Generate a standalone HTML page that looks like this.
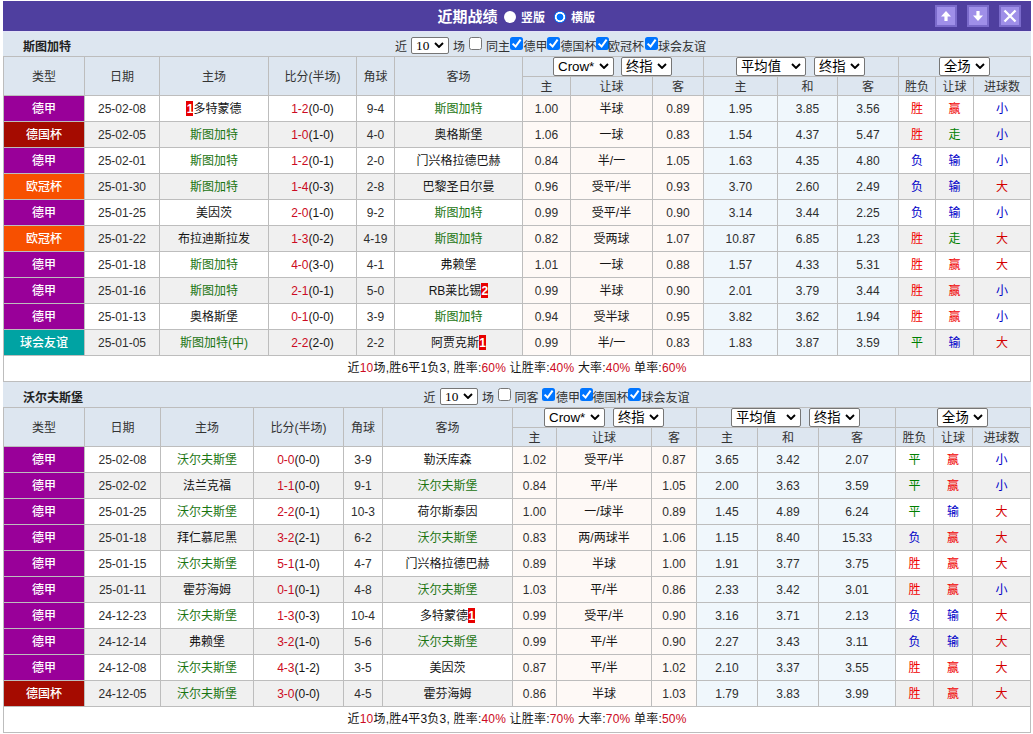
<!DOCTYPE html>
<html lang="zh-CN"><head><meta charset="utf-8"><title>近期战绩</title>
<style>
html,body{margin:0;padding:0;background:#fff;}
body{width:1033px;height:734px;overflow:hidden;position:relative;font-family:"Liberation Sans","Noto Sans CJK SC",sans-serif;font-size:12px;color:#333;}
.wrap{position:absolute;left:3px;top:1px;width:1028px;}
.hdr{position:relative;height:30px;background:#4f3f9f;color:#fff;font-weight:bold;}
.ttl{position:absolute;left:434.5px;top:6px;font-size:15px;line-height:20px;}
.rd{position:absolute;top:10.4px;margin-left:.3px;width:12px;height:12px;border-radius:50%;background:#fff;box-sizing:border-box;}
.rd.on{background:radial-gradient(circle at 50% 50%,#0075ff 0,#0075ff 3.1px,#fff 3.7px,#fff 4.9px,#0075ff 5.3px,#0075ff 6px);}
.rl{position:absolute;top:8px;line-height:18px;font-size:12px;}
.btn{position:absolute;top:4px;width:18px;height:18px;border:2px solid #7b6bcb;background:#9f8fe8;}
.btn svg{display:block;}
.tm{position:relative;height:25px;background:#dde6f0;}
.tn{position:absolute;left:20px;top:7px;line-height:18px;font-weight:bold;color:#222;}
.ft{position:absolute;top:6.5px;line-height:18px;color:#333;white-space:nowrap;}
.cb{position:absolute;top:6px;width:13px;height:13px;box-sizing:border-box;border:1px solid #767676;border-radius:2.5px;background:#fff;}
.cb.on{border:none;background:#0075ff;}
.cb svg{display:block;}
.fsel{position:absolute;top:6px;}
.sel{display:inline-block;position:relative;box-sizing:border-box;height:19px;border:1px solid #767676;border-radius:2px;background:#fff;color:#000;font-size:13.33px;line-height:18px;text-align:left;vertical-align:top;font-weight:normal;}
.sel span{position:absolute;left:4px;top:0;}
.sel svg{position:absolute;right:4px;top:5px;}
.sel.m7{margin-left:7px;}
.sel.m8{margin-left:8px;}
.sel.s10{height:17px;line-height:15px;font-family:"Liberation Serif",serif;}
.sel.s10 span{left:4px;}
.sel.s10 svg{top:4px;}
table{border-collapse:separate;border-spacing:0;table-layout:fixed;width:1028px;border-left:1px solid #bdbdbd;border-top:1px solid #bdbdbd;}
td{color:#151515;}
td,th{border-right:1px solid #bdbdbd;border-bottom:1px solid #bdbdbd;padding:0;text-align:center;font-weight:normal;white-space:nowrap;overflow:hidden;box-sizing:border-box;}
th{background:#dde6f0;color:#333;}
tr.h1{height:20px;}
tr.h2{height:19px;}
tr.h1 th{height:20px;}
tr.h2 th{height:19px;line-height:16px;padding-top:2px;}
tr.h1 th[rowspan]{padding-bottom:2px;}
tr.o td,tr.e td{height:26px;line-height:23px;padding-top:2px;}
tr.o td{background:#fff;}
tr.e td{background:#f0f0f0;}
td.n{color:#2e2e2e;}
.tm.first{box-shadow:inset 0 1px 0 #e4e2f8;}
td.ah{background:#fef9f6 !important;}
td.eu{background:#f0f7fc !important;}
.r{color:#cc0a22;font-weight:normal;}
td.r{color:#f00000;}
td.b{color:#0000c8;}
td.g{color:#1a7410;}
td.gg{color:#008000;}
td.rr{color:#d40000;}
td.lg{color:#fff;font-weight:500;}
td.l1{background:#990099 !important;}
td.l2{background:#a50b00 !important;}
td.l3{background:#f75000 !important;}
td.l4{background:#00a3a3 !important;}
i.rc{display:inline-block;font-style:normal;font-weight:bold;background:#e80000;color:#fff;width:7px;height:15px;line-height:17px;overflow:hidden;text-align:center;vertical-align:top;margin-top:3px;font-size:12px;}
tr.sum td{height:26px;line-height:25px;background:#fff;letter-spacing:.2px;}
em{font-style:normal;color:#cc0a22;}
th.sc{vertical-align:top;text-align:left;}
</style></head>
<body>
<div class="wrap">
<div class="hdr"><span class="ttl">近期战绩</span><i class="rd" style="left:501px"></i><span class="rl" style="left:518px">竖版</span><i class="rd on" style="left:551px"></i><span class="rl" style="left:568px">横版</span>
<span class="btn" style="left:932px"><svg viewBox="0 0 18 18" width="18" height="18"><path d="M9 4 L14 9.4 L10.6 9.4 L10.6 14 L7.4 14 L7.4 9.4 L4 9.4 Z" fill="#fff"/></svg></span>
<span class="btn" style="left:964px"><svg viewBox="0 0 18 18" width="18" height="18"><path d="M9 14 L14 8.6 L10.6 8.6 L10.6 4 L7.4 4 L7.4 8.6 L4 8.6 Z" fill="#fff"/></svg></span>
<span class="btn" style="left:996px"><svg viewBox="0 0 18 18" width="18" height="18"><path d="M3.5 3.5 L14.5 14.5 M14.5 3.5 L3.5 14.5" stroke="#fff" stroke-width="2.3" fill="none"/></svg></span>
</div>
<div class="tm first"><span class="tn">斯图加特</span><span class="ft" style="left:392.0px">近</span><span class="fsel" style="left:408px"><span class="sel s10" style="width:38px"><span>10</span><svg viewBox="0 0 10 6" width="10" height="6"><path d="M1 1 L5 5 L9 1" fill="none" stroke="#000" stroke-width="1.9"/></svg></span></span><span class="ft" style="left:450.0px">场</span><i class="cb" style="left:465.5px"></i><span class="ft" style="left:483.0px">同主</span><i class="cb on" style="left:507.0px"><svg viewBox="0 0 13 13" width="13" height="13"><path d="M2.6 6.6 L5.6 9.5 L10.6 2.6" fill="none" stroke="#fff" stroke-width="2"/></svg></i><span class="ft" style="left:520.5px">德甲</span><i class="cb on" style="left:544.0px"><svg viewBox="0 0 13 13" width="13" height="13"><path d="M2.6 6.6 L5.6 9.5 L10.6 2.6" fill="none" stroke="#fff" stroke-width="2"/></svg></i><span class="ft" style="left:557.5px">德国杯</span><i class="cb on" style="left:592.5px"><svg viewBox="0 0 13 13" width="13" height="13"><path d="M2.6 6.6 L5.6 9.5 L10.6 2.6" fill="none" stroke="#fff" stroke-width="2"/></svg></i><span class="ft" style="left:605.0px">欧冠杯</span><i class="cb on" style="left:641.5px"><svg viewBox="0 0 13 13" width="13" height="13"><path d="M2.6 6.6 L5.6 9.5 L10.6 2.6" fill="none" stroke="#fff" stroke-width="2"/></svg></i><span class="ft" style="left:655.0px">球会友谊</span></div>
<table><colgroup><col style="width:81px"><col style="width:75px"><col style="width:109px"><col style="width:88px"><col style="width:38px"><col style="width:128px"><col style="width:48px"><col style="width:82px"><col style="width:51px"><col style="width:74px"><col style="width:60px"><col style="width:61px"><col style="width:37px"><col style="width:38px"><col style="width:57px"></colgroup>
<tr class="h1"><th rowspan="2">类型</th><th rowspan="2">日期</th><th rowspan="2">主场</th><th rowspan="2">比分(半场)</th><th rowspan="2">角球</th><th rowspan="2">客场</th><th colspan="3" class="sc" style="padding-left:30px"><span class="sel " style="width:61px"><span>Crow*</span><svg viewBox="0 0 10 6" width="10" height="6"><path d="M1 1 L5 5 L9 1" fill="none" stroke="#000" stroke-width="1.9"/></svg></span><span class="sel m7" style="width:51px"><span>终指</span><svg viewBox="0 0 10 6" width="10" height="6"><path d="M1 1 L5 5 L9 1" fill="none" stroke="#000" stroke-width="1.9"/></svg></span></th><th colspan="3" class="sc" style="padding-left:32px"><span class="sel " style="width:70px"><span>平均值</span><svg viewBox="0 0 10 6" width="10" height="6"><path d="M1 1 L5 5 L9 1" fill="none" stroke="#000" stroke-width="1.9"/></svg></span><span class="sel m8" style="width:51px"><span>终指</span><svg viewBox="0 0 10 6" width="10" height="6"><path d="M1 1 L5 5 L9 1" fill="none" stroke="#000" stroke-width="1.9"/></svg></span></th><th colspan="3" class="sc" style="padding-left:40px"><span class="sel " style="width:51px"><span>全场</span><svg viewBox="0 0 10 6" width="10" height="6"><path d="M1 1 L5 5 L9 1" fill="none" stroke="#000" stroke-width="1.9"/></svg></span></th></tr>
<tr class="h2"><th>主</th><th>让球</th><th>客</th><th>主</th><th>和</th><th>客</th><th>胜负</th><th>让球</th><th>进球数</th></tr>
<tr class="o"><td class="lg l1">德甲</td><td class="n">25-02-08</td><td><i class="rc">1</i>多特蒙德</td><td><b class="r">1-2</b>(0-0)</td><td class="n">9-4</td><td class="g">斯图加特</td><td class="ah n">1.00</td><td class="ah">半球</td><td class="ah n">0.89</td><td class="eu n">1.95</td><td class="eu n">3.85</td><td class="eu n">3.56</td><td class="r">胜</td><td class="r">赢</td><td class="b">小</td></tr>
<tr class="e"><td class="lg l2">德国杯</td><td class="n">25-02-05</td><td class="g">斯图加特</td><td><b class="r">1-0</b>(1-0)</td><td class="n">4-0</td><td>奥格斯堡</td><td class="ah n">1.06</td><td class="ah">一球</td><td class="ah n">0.83</td><td class="eu n">1.54</td><td class="eu n">4.37</td><td class="eu n">5.47</td><td class="r">胜</td><td class="gg">走</td><td class="b">小</td></tr>
<tr class="o"><td class="lg l1">德甲</td><td class="n">25-02-01</td><td class="g">斯图加特</td><td><b class="r">1-2</b>(0-1)</td><td class="n">2-0</td><td>门兴格拉德巴赫</td><td class="ah n">0.84</td><td class="ah">半/一</td><td class="ah n">1.05</td><td class="eu n">1.63</td><td class="eu n">4.35</td><td class="eu n">4.80</td><td class="b">负</td><td class="b">输</td><td class="b">小</td></tr>
<tr class="e"><td class="lg l3">欧冠杯</td><td class="n">25-01-30</td><td class="g">斯图加特</td><td><b class="r">1-4</b>(0-3)</td><td class="n">2-8</td><td>巴黎圣日尔曼</td><td class="ah n">0.96</td><td class="ah">受平/半</td><td class="ah n">0.93</td><td class="eu n">3.70</td><td class="eu n">2.60</td><td class="eu n">2.49</td><td class="b">负</td><td class="b">输</td><td class="rr">大</td></tr>
<tr class="o"><td class="lg l1">德甲</td><td class="n">25-01-25</td><td>美因茨</td><td><b class="r">2-0</b>(1-0)</td><td class="n">9-2</td><td class="g">斯图加特</td><td class="ah n">0.99</td><td class="ah">受平/半</td><td class="ah n">0.90</td><td class="eu n">3.14</td><td class="eu n">3.44</td><td class="eu n">2.25</td><td class="b">负</td><td class="b">输</td><td class="b">小</td></tr>
<tr class="e"><td class="lg l3">欧冠杯</td><td class="n">25-01-22</td><td>布拉迪斯拉发</td><td><b class="r">1-3</b>(0-2)</td><td class="n">4-19</td><td class="g">斯图加特</td><td class="ah n">0.82</td><td class="ah">受两球</td><td class="ah n">1.07</td><td class="eu n">10.87</td><td class="eu n">6.85</td><td class="eu n">1.23</td><td class="r">胜</td><td class="gg">走</td><td class="rr">大</td></tr>
<tr class="o"><td class="lg l1">德甲</td><td class="n">25-01-18</td><td class="g">斯图加特</td><td><b class="r">4-0</b>(3-0)</td><td class="n">4-1</td><td>弗赖堡</td><td class="ah n">1.01</td><td class="ah">一球</td><td class="ah n">0.88</td><td class="eu n">1.57</td><td class="eu n">4.33</td><td class="eu n">5.31</td><td class="r">胜</td><td class="r">赢</td><td class="rr">大</td></tr>
<tr class="e"><td class="lg l1">德甲</td><td class="n">25-01-16</td><td class="g">斯图加特</td><td><b class="r">2-1</b>(0-1)</td><td class="n">5-0</td><td>RB莱比锡<i class="rc">2</i></td><td class="ah n">0.99</td><td class="ah">半球</td><td class="ah n">0.90</td><td class="eu n">2.01</td><td class="eu n">3.79</td><td class="eu n">3.44</td><td class="r">胜</td><td class="r">赢</td><td class="b">小</td></tr>
<tr class="o"><td class="lg l1">德甲</td><td class="n">25-01-13</td><td>奥格斯堡</td><td><b class="r">0-1</b>(0-0)</td><td class="n">3-9</td><td class="g">斯图加特</td><td class="ah n">0.94</td><td class="ah">受半球</td><td class="ah n">0.95</td><td class="eu n">3.82</td><td class="eu n">3.62</td><td class="eu n">1.94</td><td class="r">胜</td><td class="r">赢</td><td class="b">小</td></tr>
<tr class="e"><td class="lg l4">球会友谊</td><td class="n">25-01-05</td><td class="g">斯图加特(中)</td><td><b class="r">2-2</b>(2-0)</td><td class="n">2-2</td><td>阿贾克斯<i class="rc">1</i></td><td class="ah n">0.99</td><td class="ah">半/一</td><td class="ah n">0.83</td><td class="eu n">1.83</td><td class="eu n">3.87</td><td class="eu n">3.59</td><td class="gg">平</td><td class="b">输</td><td class="rr">大</td></tr>
<tr class="sum"><td colspan="15">近<em>10</em>场,胜6平1负3, 胜率:<em>60%</em> 让胜率:<em>40%</em> 大率:<em>40%</em> 单率:<em>60%</em></td></tr>
</table>
<div class="tm"><span class="tn">沃尔夫斯堡</span><span class="ft" style="left:420.5px">近</span><span class="fsel" style="left:437px"><span class="sel s10" style="width:38px"><span>10</span><svg viewBox="0 0 10 6" width="10" height="6"><path d="M1 1 L5 5 L9 1" fill="none" stroke="#000" stroke-width="1.9"/></svg></span></span><span class="ft" style="left:479.0px">场</span><i class="cb" style="left:494.5px"></i><span class="ft" style="left:511.5px">同客</span><i class="cb on" style="left:539.0px"><svg viewBox="0 0 13 13" width="13" height="13"><path d="M2.6 6.6 L5.6 9.5 L10.6 2.6" fill="none" stroke="#fff" stroke-width="2"/></svg></i><span class="ft" style="left:553.0px">德甲</span><i class="cb on" style="left:576.5px"><svg viewBox="0 0 13 13" width="13" height="13"><path d="M2.6 6.6 L5.6 9.5 L10.6 2.6" fill="none" stroke="#fff" stroke-width="2"/></svg></i><span class="ft" style="left:589.5px">德国杯</span><i class="cb on" style="left:625.0px"><svg viewBox="0 0 13 13" width="13" height="13"><path d="M2.6 6.6 L5.6 9.5 L10.6 2.6" fill="none" stroke="#fff" stroke-width="2"/></svg></i><span class="ft" style="left:638.5px">球会友谊</span></div>
<table><colgroup><col style="width:81px"><col style="width:76px"><col style="width:93px"><col style="width:90px"><col style="width:39px"><col style="width:130px"><col style="width:44px"><col style="width:95px"><col style="width:45px"><col style="width:61px"><col style="width:61px"><col style="width:77px"><col style="width:38px"><col style="width:39px"><col style="width:58px"></colgroup>
<tr class="h1"><th rowspan="2">类型</th><th rowspan="2">日期</th><th rowspan="2">主场</th><th rowspan="2">比分(半场)</th><th rowspan="2">角球</th><th rowspan="2">客场</th><th colspan="3" class="sc" style="padding-left:31px"><span class="sel " style="width:61px"><span>Crow*</span><svg viewBox="0 0 10 6" width="10" height="6"><path d="M1 1 L5 5 L9 1" fill="none" stroke="#000" stroke-width="1.9"/></svg></span><span class="sel m8" style="width:51px"><span>终指</span><svg viewBox="0 0 10 6" width="10" height="6"><path d="M1 1 L5 5 L9 1" fill="none" stroke="#000" stroke-width="1.9"/></svg></span></th><th colspan="3" class="sc" style="padding-left:34px"><span class="sel " style="width:70px"><span>平均值</span><svg viewBox="0 0 10 6" width="10" height="6"><path d="M1 1 L5 5 L9 1" fill="none" stroke="#000" stroke-width="1.9"/></svg></span><span class="sel m8" style="width:51px"><span>终指</span><svg viewBox="0 0 10 6" width="10" height="6"><path d="M1 1 L5 5 L9 1" fill="none" stroke="#000" stroke-width="1.9"/></svg></span></th><th colspan="3" class="sc" style="padding-left:41px"><span class="sel " style="width:51px"><span>全场</span><svg viewBox="0 0 10 6" width="10" height="6"><path d="M1 1 L5 5 L9 1" fill="none" stroke="#000" stroke-width="1.9"/></svg></span></th></tr>
<tr class="h2"><th>主</th><th>让球</th><th>客</th><th>主</th><th>和</th><th>客</th><th>胜负</th><th>让球</th><th>进球数</th></tr>
<tr class="o"><td class="lg l1">德甲</td><td class="n">25-02-08</td><td class="g">沃尔夫斯堡</td><td><b class="r">0-0</b>(0-0)</td><td class="n">3-9</td><td>勒沃库森</td><td class="ah n">1.02</td><td class="ah">受平/半</td><td class="ah n">0.87</td><td class="eu n">3.65</td><td class="eu n">3.42</td><td class="eu n">2.07</td><td class="gg">平</td><td class="r">赢</td><td class="b">小</td></tr>
<tr class="e"><td class="lg l1">德甲</td><td class="n">25-02-02</td><td>法兰克福</td><td><b class="r">1-1</b>(0-0)</td><td class="n">9-1</td><td class="g">沃尔夫斯堡</td><td class="ah n">0.84</td><td class="ah">平/半</td><td class="ah n">1.05</td><td class="eu n">2.00</td><td class="eu n">3.63</td><td class="eu n">3.59</td><td class="gg">平</td><td class="r">赢</td><td class="b">小</td></tr>
<tr class="o"><td class="lg l1">德甲</td><td class="n">25-01-25</td><td class="g">沃尔夫斯堡</td><td><b class="r">2-2</b>(0-1)</td><td class="n">10-3</td><td>荷尔斯泰因</td><td class="ah n">1.00</td><td class="ah">一/球半</td><td class="ah n">0.89</td><td class="eu n">1.45</td><td class="eu n">4.89</td><td class="eu n">6.24</td><td class="gg">平</td><td class="b">输</td><td class="rr">大</td></tr>
<tr class="e"><td class="lg l1">德甲</td><td class="n">25-01-18</td><td>拜仁慕尼黑</td><td><b class="r">3-2</b>(2-1)</td><td class="n">6-2</td><td class="g">沃尔夫斯堡</td><td class="ah n">0.83</td><td class="ah">两/两球半</td><td class="ah n">1.06</td><td class="eu n">1.15</td><td class="eu n">8.40</td><td class="eu n">15.33</td><td class="b">负</td><td class="r">赢</td><td class="rr">大</td></tr>
<tr class="o"><td class="lg l1">德甲</td><td class="n">25-01-15</td><td class="g">沃尔夫斯堡</td><td><b class="r">5-1</b>(1-0)</td><td class="n">4-7</td><td>门兴格拉德巴赫</td><td class="ah n">0.89</td><td class="ah">半球</td><td class="ah n">1.00</td><td class="eu n">1.91</td><td class="eu n">3.77</td><td class="eu n">3.75</td><td class="r">胜</td><td class="r">赢</td><td class="rr">大</td></tr>
<tr class="e"><td class="lg l1">德甲</td><td class="n">25-01-11</td><td>霍芬海姆</td><td><b class="r">0-1</b>(0-1)</td><td class="n">4-8</td><td class="g">沃尔夫斯堡</td><td class="ah n">1.03</td><td class="ah">平/半</td><td class="ah n">0.86</td><td class="eu n">2.33</td><td class="eu n">3.42</td><td class="eu n">3.01</td><td class="r">胜</td><td class="r">赢</td><td class="b">小</td></tr>
<tr class="o"><td class="lg l1">德甲</td><td class="n">24-12-23</td><td class="g">沃尔夫斯堡</td><td><b class="r">1-3</b>(0-3)</td><td class="n">10-4</td><td>多特蒙德<i class="rc">1</i></td><td class="ah n">0.99</td><td class="ah">受平/半</td><td class="ah n">0.90</td><td class="eu n">3.16</td><td class="eu n">3.71</td><td class="eu n">2.13</td><td class="b">负</td><td class="b">输</td><td class="rr">大</td></tr>
<tr class="e"><td class="lg l1">德甲</td><td class="n">24-12-14</td><td>弗赖堡</td><td><b class="r">3-2</b>(1-0)</td><td class="n">5-6</td><td class="g">沃尔夫斯堡</td><td class="ah n">0.99</td><td class="ah">平/半</td><td class="ah n">0.90</td><td class="eu n">2.27</td><td class="eu n">3.43</td><td class="eu n">3.11</td><td class="b">负</td><td class="b">输</td><td class="rr">大</td></tr>
<tr class="o"><td class="lg l1">德甲</td><td class="n">24-12-08</td><td class="g">沃尔夫斯堡</td><td><b class="r">4-3</b>(1-2)</td><td class="n">3-5</td><td>美因茨</td><td class="ah n">0.87</td><td class="ah">平/半</td><td class="ah n">1.02</td><td class="eu n">2.10</td><td class="eu n">3.37</td><td class="eu n">3.55</td><td class="r">胜</td><td class="r">赢</td><td class="rr">大</td></tr>
<tr class="e"><td class="lg l2">德国杯</td><td class="n">24-12-05</td><td class="g">沃尔夫斯堡</td><td><b class="r">3-0</b>(0-0)</td><td class="n">4-5</td><td>霍芬海姆</td><td class="ah n">0.86</td><td class="ah">半球</td><td class="ah n">1.03</td><td class="eu n">1.79</td><td class="eu n">3.83</td><td class="eu n">3.99</td><td class="r">胜</td><td class="r">赢</td><td class="rr">大</td></tr>
<tr class="sum"><td colspan="15">近<em>10</em>场,胜4平3负3, 胜率:<em>40%</em> 让胜率:<em>70%</em> 大率:<em>70%</em> 单率:<em>50%</em></td></tr>
</table>
</div>
</body></html>
